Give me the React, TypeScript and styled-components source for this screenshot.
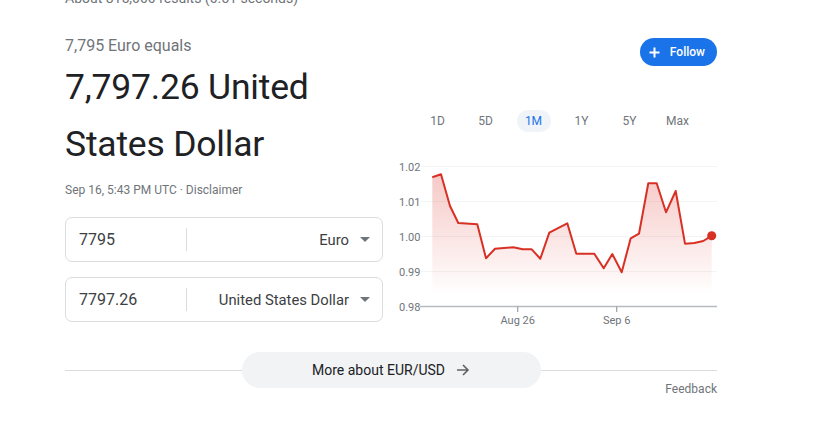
import React from "react";
import styled, { createGlobalStyle } from "styled-components";

const GlobalStyle = createGlobalStyle`
  html, body { margin: 0; padding: 0; background: #fff; }
  body { font-family: Roboto, "Liberation Sans", Arial, sans-serif; color: #202124; }
`;

const Page = styled.div`
  width: 652px;
  padding-left: 65px;
  margin-top: -13px;
`;

const Stats = styled.div`
  font-size: 14px;
  line-height: 22px;
  color: #70757a;
  white-space: nowrap;
`;

const Main = styled.div`
  display: grid;
  grid-template-columns: 318px 319px;
  column-gap: 15px;
  margin-top: 21px;
`;

const LeftCol = styled.div`
  display: flex;
  flex-direction: column;
`;

const Equals = styled.div`
  margin-top: 4px;
  font-size: 16px;
  line-height: 24px;
  color: #70757a;
`;

const Result = styled.div`
  margin-top: 1px;
  font-size: 35.5px;
  line-height: 57px;
  color: #202124;
  letter-spacing: -0.2px;
`;

const Meta = styled.div`
  margin-top: 9px;
  font-size: 12px;
  line-height: 16px;
  color: #70757a;
`;

const Fields = styled.div`
  display: flex;
  flex-direction: column;
  gap: 15px;
  margin-top: 19px;
`;

const Field = styled.div`
  display: flex;
  align-items: center;
  height: 45px;
  box-sizing: border-box;
  border: 1px solid #dadce0;
  border-radius: 7px;
  padding: 0 12px 0 13px;
`;

const Amount = styled.div`
  width: 107px;
  font-size: 16px;
  color: #3c4043;
`;

const Divider = styled.div`
  width: 1px;
  height: 23px;
  background: #dadce0;
`;

const Currency = styled.div`
  flex: 1;
  display: flex;
  align-items: center;
  justify-content: flex-end;
  font-size: 14.8px;
  color: #3c4043;
`;

const Caret = styled.span`
  width: 0;
  height: 0;
  margin-left: 11px;
  border-left: 5px solid transparent;
  border-right: 5px solid transparent;
  border-top: 5px solid #70757a;
`;

const RightCol = styled.div`
  display: flex;
  flex-direction: column;
`;

const FollowRow = styled.div`
  display: flex;
  justify-content: flex-end;
  margin-top: 8px;
`;

const FollowButton = styled.button`
  display: flex;
  align-items: center;
  gap: 10px;
  height: 28px;
  padding: 0 12px 0 9px;
  border: none;
  border-radius: 14px;
  background: #1a73e8;
  color: #fff;
  font-family: Roboto, "Liberation Sans", Arial, sans-serif;
  font-size: 12px;
  font-weight: 500;
`;

const Tabs = styled.div`
  display: flex;
  justify-content: center;
  gap: 14px;
  margin-top: 44px;
`;

const Tab = styled.div<{ $active?: boolean }>`
  width: 34px;
  height: 22px;
  border-radius: 11px;
  display: flex;
  align-items: center;
  justify-content: center;
  font-size: 12px;
  color: ${(p) => (p.$active ? "#1a73e8" : "#70757a")};
  background: ${(p) => (p.$active ? "#f0f4f9" : "transparent")};
`;

const ChartSvg = styled.svg`
  display: block;
  margin-top: 18px;
`;

const BottomRow = styled.div`
  display: flex;
  align-items: center;
  margin-top: 22px;
`;

const Rule = styled.div`
  flex: 1;
  height: 1px;
  background: #dadce0;
`;

const MoreButton = styled.div`
  width: 299px;
  height: 36px;
  border-radius: 18px;
  background: #f1f3f4;
  display: flex;
  align-items: center;
  justify-content: center;
  gap: 11px;
  font-size: 14px;
  color: #202124;
`;

const Feedback = styled.div`
  margin-top: -7px;
  text-align: right;
  font-size: 12px;
  line-height: 16px;
  color: #70757a;
`;

const points: [number, number][] = [
  [34.3, 27.3], [43, 24.3], [52, 56], [60.3, 73], [79.3, 74.3], [88, 108.3],
  [97, 98.7], [115.3, 97.3], [124.7, 99.3], [133.7, 99.3], [142.3, 108.7],
  [151.3, 82.7], [169.3, 73.3], [178.3, 103.7], [196.3, 103.7], [205.7, 118.3],
  [214.3, 104], [223.7, 122.3], [232.7, 88.3], [241, 83.7], [250.3, 33.3],
  [258.7, 33.3], [268, 62.3], [277.7, 41], [287, 93.7], [296.3, 93],
  [305.3, 91], [313.7, 85.7],
];

const Chart = () => {
  const line = points.map((p, i) => `${i ? "L" : "M"}${p[0]} ${p[1]}`).join(" ");
  const last = points[points.length - 1];
  const area = `${line} L${last[0]} 156 L${points[0][0]} 156 Z`;
  const grid = [
    { y: 16.5, label: "1.02" },
    { y: 51.5, label: "1.01" },
    { y: 86.5, label: "1.00" },
    { y: 121.5, label: "0.99" },
  ];
  return (
    <ChartSvg width="319" height="180" viewBox="0 0 319 180">
      <defs>
        <linearGradient id="fillGrad" gradientUnits="userSpaceOnUse" x1="0" y1="24" x2="0" y2="145">
          <stop offset="0" stopColor="#d93025" stopOpacity="0.26" />
          <stop offset="1" stopColor="#d93025" stopOpacity="0" />
        </linearGradient>
      </defs>
      {grid.map((g) => (
        <g key={g.label}>
          <line x1="23" x2="319" y1={g.y} y2={g.y} stroke="#f3f4f5" strokeWidth="1" />
          <text x="1" y={g.y + 4} fontSize="11" fill="#70757a" fontFamily="Roboto, Arial, sans-serif">
            {g.label}
          </text>
        </g>
      ))}
      <path d={area} fill="url(#fillGrad)" />
      <line x1="22" x2="319" y1="156.5" y2="156.5" stroke="#b7bbbf" strokeWidth="1.6" />
      <text x="1" y="160.5" fontSize="11" fill="#70757a" fontFamily="Roboto, Arial, sans-serif">0.98</text>
      <line x1="119.7" x2="119.7" y1="156.5" y2="162" stroke="#9aa0a6" strokeWidth="1.2" />
      <line x1="218.7" x2="218.7" y1="156.5" y2="162" stroke="#9aa0a6" strokeWidth="1.2" />
      <text x="119.7" y="174" fontSize="11" fill="#70757a" textAnchor="middle" fontFamily="Roboto, Arial, sans-serif">Aug 26</text>
      <text x="218.7" y="174" fontSize="11" fill="#70757a" textAnchor="middle" fontFamily="Roboto, Arial, sans-serif">Sep 6</text>
      <path d={line} fill="none" stroke="#d93025" strokeWidth="2" strokeLinejoin="round" />
      <circle cx={last[0]} cy={last[1]} r="4.5" fill="#d93025" />
    </ChartSvg>
  );
};

export default function App() {
  const tabs = ["1D", "5D", "1M", "1Y", "5Y", "Max"];
  return (
    <>
      <GlobalStyle />
      <Page>
        <Stats>About 815,000 results (0.51 seconds)</Stats>
        <Main>
          <LeftCol>
            <Equals>7,795 Euro equals</Equals>
            <Result>
              7,797.26 United
              <br />
              States Dollar
            </Result>
            <Meta>Sep 16, 5:43 PM UTC · Disclaimer</Meta>
            <Fields>
              <Field>
                <Amount>7795</Amount>
                <Divider />
                <Currency>
                  Euro
                  <Caret />
                </Currency>
              </Field>
              <Field>
                <Amount>7797.26</Amount>
                <Divider />
                <Currency>
                  United States Dollar
                  <Caret />
                </Currency>
              </Field>
            </Fields>
          </LeftCol>
          <RightCol>
            <FollowRow>
              <FollowButton>
                <svg width="11" height="11" viewBox="0 0 11 11">
                  <path d="M5.5 0.5v10M0.5 5.5h10" stroke="#fff" strokeWidth="2" />
                </svg>
                Follow
              </FollowButton>
            </FollowRow>
            <Tabs>
              {tabs.map((t) => (
                <Tab key={t} $active={t === "1M"}>
                  {t}
                </Tab>
              ))}
            </Tabs>
            <Chart />
          </RightCol>
        </Main>
        <BottomRow>
          <Rule />
          <MoreButton>
            More about EUR/USD
            <svg width="14" height="14" viewBox="0 0 14 14">
              <path d="M1 7h11M7 2l5 5-5 5" fill="none" stroke="#5f6368" strokeWidth="1.6" />
            </svg>
          </MoreButton>
          <Rule />
        </BottomRow>
        <Feedback>Feedback</Feedback>
      </Page>
    </>
  );
}
